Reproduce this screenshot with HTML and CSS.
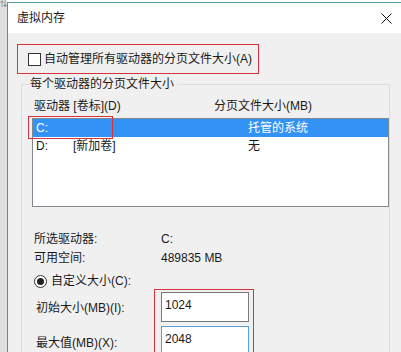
FILE: index.html
```html
<!DOCTYPE html>
<html lang="zh-CN">
<head>
    <title>虚拟内存</title>
    <link rel="stylesheet" href="styles.css">
</head>
<body>
    <div class="desk">
        <div class="strip"><span class="strip-icon">⇅</span></div>
        <div class="window">
            <div class="titlebar">
                <span class="title">虚拟内存</span>
                <svg class="close" width="11" height="11" viewBox="0 0 11 11">
                    <path d="M0.5 0.5 L10.5 10.5 M10.5 0.5 L0.5 10.5" stroke="#111" stroke-width="1" fill="none"/>
                </svg>
            </div>
            <div class="content">
                <div class="mark auto-row">
                    <span class="checkbox"></span>
                    <span>自动管理所有驱动器的分页文件大小(A)</span>
                </div>
                <fieldset class="group">
                    <legend>每个驱动器的分页文件大小</legend>
                    <div class="cols">
                        <span>驱动器 [卷标](D)</span>
                        <span>分页文件大小(MB)</span>
                    </div>
                    <div class="drive-list">
                        <div class="row selected">
                            <span>C:</span>
                            <span></span>
                            <span>托管的系统</span>
                        </div>
                        <div class="row">
                            <span>D:</span>
                            <span>[新加卷]</span>
                            <span>无</span>
                        </div>
                        <div class="mark row-mark"></div>
                    </div>
                    <div class="info">
                        <span>所选驱动器:</span>
                        <span>C:</span>
                        <span>可用空间:</span>
                        <span>489835 MB</span>
                    </div>
                    <div class="radio-row">
                        <span class="radio"></span>
                        <span>自定义大小(C):</span>
                    </div>
                    <div class="sizes">
                        <div class="size-labels">
                            <span>初始大小(MB)(I):</span>
                            <span>最大值(MB)(X):</span>
                        </div>
                        <div class="mark size-inputs">
                            <input type="text" class="field" value="1024">
                            <input type="text" class="field focused" value="2048">
                        </div>
                    </div>
                </fieldset>
            </div>
        </div>
    </div>
</body>
</html>
```

FILE: styles.css
```css
body {
    margin: 0;
    width: 401px;
    height: 352px;
    overflow: hidden;
    background-color: #fbfdfd;
    font-family: "Liberation Sans", "Noto Sans CJK SC", sans-serif;
    font-size: 12px;
    color: #1a1a1a;
}
.desk {
    display: flex;
    height: 352px;
}
.strip {
    width: 7px;
    flex-shrink: 0;
    background-color: #dedede;
    overflow: hidden;
}
.strip-icon {
    display: block;
    font-size: 7px;
    line-height: 8px;
    color: #555;
}
.window {
    flex: 1;
    margin-top: 2px;
    border-top: 1px solid #5a9ea6;
    border-left: 1px solid #4b8fbd;
    background-color: #f0f0f0;
    overflow: hidden;
}
.titlebar {
    height: 30px;
    background-color: #fff;
    display: flex;
    align-items: center;
    justify-content: space-between;
    padding: 0 9px 0 9px;
}
.title {
    line-height: 16px;
}
.content {
    padding: 11px 0 0 9px;
}
.mark {
    border: 1px solid #d8323a;
}
.auto-row {
    width: 230px;
    height: 28px;
    display: flex;
    align-items: center;
    gap: 3px;
    padding-left: 10px;
    line-height: 16px;
}
.checkbox {
    width: 11px;
    height: 11px;
    border: 1px solid #333;
    background-color: #fff;
}
.group {
    margin: 3px 0 0 4px;
    width: 369px;
    box-sizing: border-box;
    border: 1px solid #dcdcdc;
    padding: 7px 0 40px 10px;
}
.group legend {
    padding: 0 3px 0 0;
    margin-left: -2px;
    line-height: 14px;
}
.cols {
    display: grid;
    grid-template-columns: 180px 1fr;
    padding-left: 2px;
    line-height: 16px;
}
.drive-list {
    position: relative;
    margin-top: 4px;
    height: 87px;
    border: 1px solid #828790;
    background-color: #fff;
}
.row {
    display: grid;
    grid-template-columns: 37px 175px 1fr;
    padding-left: 3px;
    height: 18px;
    line-height: 18px;
}
.row.selected {
    background-color: #3392f5;
    color: #fff;
}
.row-mark {
    position: absolute;
    left: -5px;
    top: -3px;
    width: 83px;
    height: 21px;
}
.info {
    display: grid;
    grid-template-columns: 127px 1fr;
    padding-left: 2px;
    margin-top: 23px;
    line-height: 19px;
}
.radio-row {
    display: flex;
    align-items: center;
    gap: 4px;
    padding-left: 2px;
    margin-top: 5px;
    line-height: 16px;
}
.radio {
    width: 11px;
    height: 11px;
    border: 1px solid #333;
    border-radius: 50%;
    background-color: #fff;
    display: flex;
    align-items: center;
    justify-content: center;
}
.radio::after {
    content: "";
    width: 7px;
    height: 7px;
    border-radius: 50%;
    background-color: #222;
}
.sizes {
    display: flex;
}
.size-labels {
    width: 122px;
    display: flex;
    flex-direction: column;
    gap: 5px;
    padding: 4px 0 0 4px;
    box-sizing: border-box;
}
.size-labels span {
    line-height: 30px;
}
.size-inputs {
    width: 100px;
    display: flex;
    flex-direction: column;
    gap: 4px;
    padding: 2px 0 20px 6px;
    box-sizing: border-box;
}
.field {
    width: 88px;
    height: 30px;
    box-sizing: border-box;
    margin: 0;
    padding: 3px 3px 8px 3px;
    border: 1px solid #7a7a7a;
    background-color: #fff;
    font-family: "Liberation Sans", "Noto Sans CJK SC", sans-serif;
    font-size: 12px;
    color: #1a1a1a;
    outline: none;
}
.field.focused {
    border-color: #5aa0dc;
}
```
